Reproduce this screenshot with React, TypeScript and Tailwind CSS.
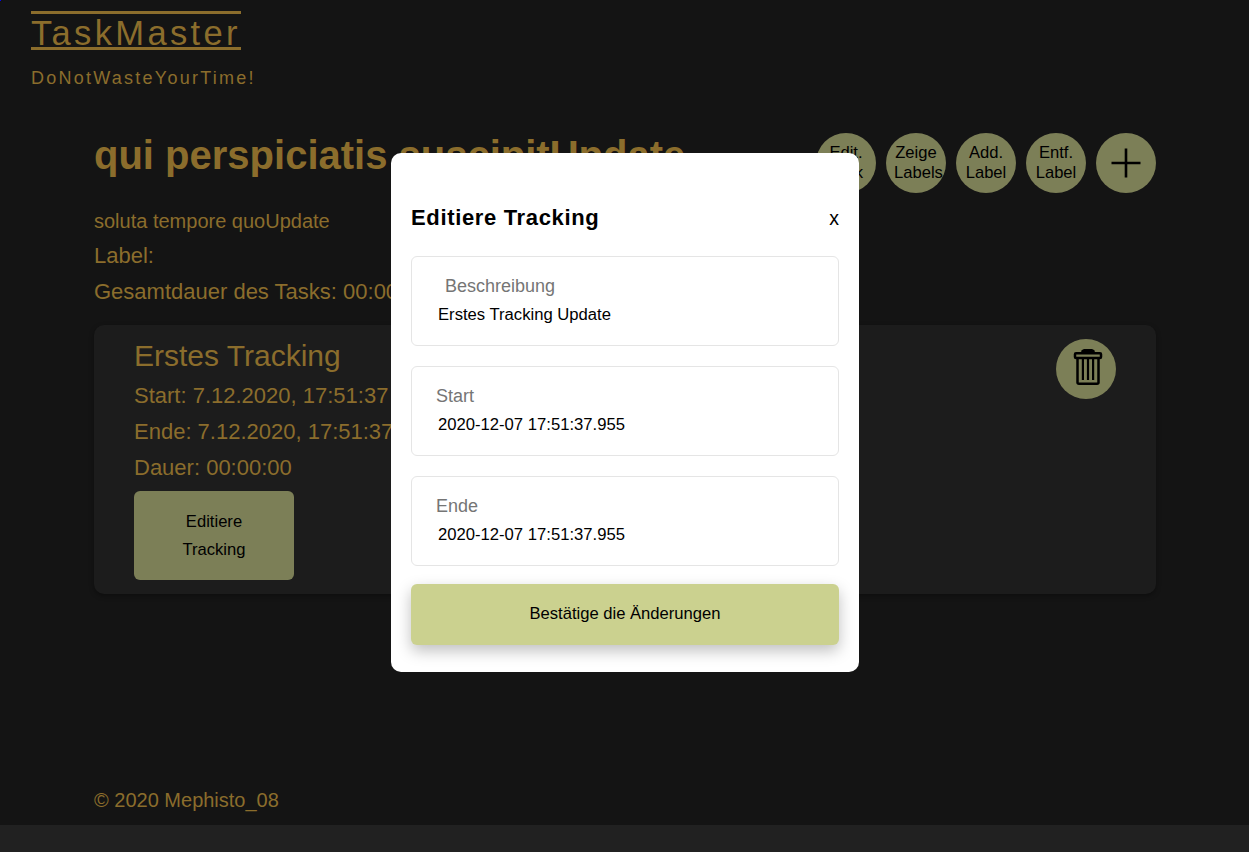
import React from "react";

const actions = [
  ["Edit.", "Task"],
  ["Zeige", "Labels"],
  ["Add.", "Label"],
  ["Entf.", "Label"],
];

const fields = [
  { label: "Beschreibung", value: "Erstes Tracking Update", indent: "pl-[33px]" },
  { label: "Start", value: "2020-12-07 17:51:37.955", indent: "pl-6" },
  { label: "Ende", value: "2020-12-07 17:51:37.955", indent: "pl-6" },
];

function TrashIcon() {
  return (
    <svg width="30" height="38" viewBox="0 0 30 38" fill="none" stroke="#000" strokeWidth="2.5" strokeLinejoin="round">
      <path d="M9.5 4V3.1L11.5 2.2H18.5L20.5 3.1V4Z" fill="#000" />
      <rect x="2" y="5.200" width="26" height="4.800" rx="1" />
      <path d="M4.500 10V34.500Q4.500 35.700 6 35.700H24Q25.500 35.700 25.500 34.500V10" />
      <path d="M9.900 10.500V32M15 10.500V32M20.100 10.500V32" strokeWidth="2.200" />
    </svg>
  );
}

function Header() {
  return (
    <header className="flex h-[94px] flex-col items-start pl-[31px] pt-[11px]">
      <h1 className="h-[39px] border-y-3 border-[#8b6d2c] text-[34.6px] leading-[38px] tracking-[3.3px]">TaskMaster</h1>
      <p className="mt-4 text-[18px] leading-6 tracking-[2.25px]">DoNotWasteYourTime!</p>
    </header>
  );
}

function TrackingCard() {
  return (
    <section className="mt-[15px] flex h-[269px] items-start justify-between rounded-[10px] bg-[#1c1c1c] px-10 pt-[14px] shadow-[0_2px_5px_rgba(0,0,0,0.35)]">
      <div>
        <h3 className="text-[30px] leading-[34px]">Erstes Tracking</h3>
        <div className="mt-[5px] text-[22px] leading-9">
          <p>Start: 7.12.2020, 17:51:37</p>
          <p>Ende: 7.12.2020, 17:51:37</p>
          <p>Dauer: 00:00:00</p>
        </div>
        <button className="mt-[5px] flex h-[89px] w-40 flex-col items-center justify-center rounded-md bg-[#7c7f57] text-[16.6px] leading-7 text-black">
          <span>Editiere</span>
          <span>Tracking</span>
        </button>
      </div>
      <button aria-label="Tracking entfernen" className="flex size-[60px] justify-center rounded-full bg-[#7c7f57] pl-1 pt-[9px]">
        <TrashIcon />
      </button>
    </section>
  );
}

function EditModal() {
  return (
    <div className="absolute inset-x-0 top-0 flex h-[825px] items-center justify-center pl-px">
      <div className="flex h-[519px] w-[468px] flex-col rounded-[10px] bg-white px-5 pt-[50px] text-black">
        <div className="flex h-7 items-center justify-between">
          <h2 className="text-[22px] font-bold tracking-[0.65px]">Editiere Tracking</h2>
          <button className="pt-0.5 text-[19.5px] leading-7">x</button>
        </div>
        <div className="mt-[25px] flex flex-col gap-5">
          {fields.map((f) => (
            <div key={f.label} className="h-[90px] rounded-md border border-[#e5e5e5] pt-[15px]">
              <div className={`${f.indent} text-[18px] leading-7 text-[#757575]`}>{f.label}</div>
              <div className="pl-[26px] text-[16.65px] leading-[30px]">{f.value}</div>
            </div>
          ))}
        </div>
        <button className="mt-[18px] h-[61px] w-full rounded-md bg-[#cbd18f] text-[16.6px] shadow-[0_6px_15px_rgba(0,0,0,0.25)]">
          Bestätige die Änderungen
        </button>
      </div>
    </div>
  );
}

export default function App() {
  return (
    <div className="relative h-[852px] overflow-hidden bg-[#212121] font-['Liberation_Sans',Arial,sans-serif] text-[#8b6d2c]">
      <div className="flex h-[825px] flex-col bg-[#141414]">
        <Header />
        <main className="ml-[94px] mt-[39px] w-[1062px]">
          <div className="flex items-start justify-between">
            <h2 className="text-[40px] font-bold leading-11">qui perspiciatis suscipitUpdate</h2>
            <div className="flex gap-2.5">
              {actions.map(([a, b]) => (
                <button key={a} className="flex size-[60px] flex-col justify-center rounded-full bg-[#7c7f57] px-2 text-[16.6px] leading-5 text-black">
                  <span className="w-full text-center">{a}</span>
                  <span className="w-full text-center">{b}</span>
                </button>
              ))}
              <button aria-label="Neues Tracking" className="flex size-[60px] items-center justify-center rounded-full bg-[#7c7f57]">
                <svg width="30" height="30" viewBox="0 0 30 30" stroke="#000" strokeWidth="2.6">
                  <path d="M15 .5V29.5M.5 15H29.5" />
                </svg>
              </button>
            </div>
          </div>
          <p className="mt-[10px] text-[20px] leading-9">soluta tempore quoUpdate</p>
          <p className="text-[22px] leading-[33px]">Label:</p>
          <p className="mt-0.5 text-[22px] leading-9">Gesamtdauer des Tasks: 00:00:00</p>
          <TrackingCard />
        </main>
        <footer className="mb-[7px] ml-[94px] mt-auto w-[1062px] text-[20px] leading-9">© 2020 Mephisto_08</footer>
      </div>
      <EditModal />
      <div className="absolute left-0 top-0 size-px bg-[#0000ff]" />
    </div>
  );
}
